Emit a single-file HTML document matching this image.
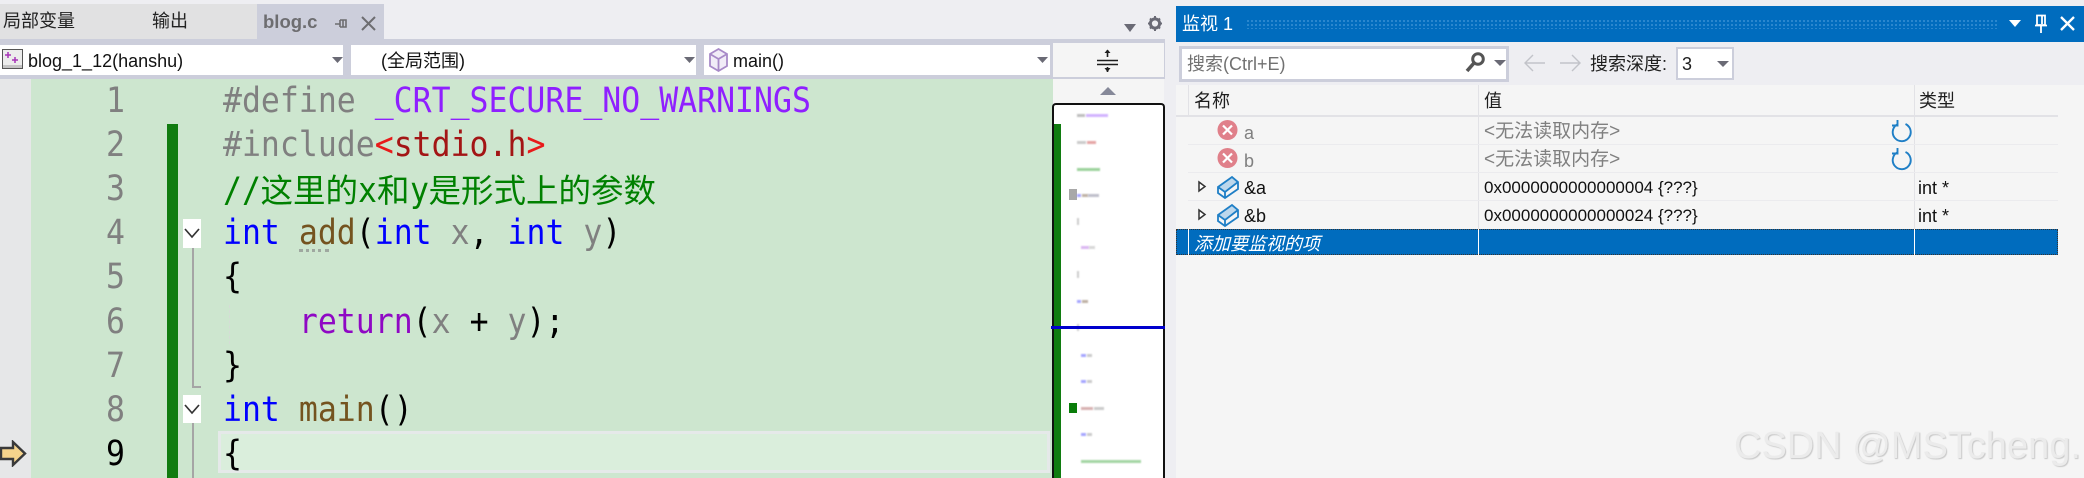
<!DOCTYPE html>
<html lang="zh">
<head>
<meta charset="utf-8">
<title>Visual Studio</title>
<style>
html,body{margin:0;padding:0;height:478px;overflow:hidden}
body{width:2084px;position:relative;background:#eeeef2;font-family:"Liberation Sans","Noto Sans CJK SC",sans-serif;color:#1e1e1e}
.a{position:absolute}
.t{position:absolute;white-space:pre;line-height:30px;height:30px;font-size:18px}
.c{position:absolute;left:222.5px;margin-top:1px;white-space:pre;font-family:"DejaVu Sans Mono",monospace;font-size:35px;line-height:44px;height:44px;color:#000;transform:scaleX(.9);transform-origin:left center}
.c i{font-style:normal}
.c3{position:absolute;left:222.5px;margin-top:1px;white-space:pre;font-family:"Noto Sans CJK SC",sans-serif;font-size:32.5px;line-height:44px;height:44px;color:#008000}
.c3 b{font-weight:normal;display:inline-block;font-family:"DejaVu Sans Mono",monospace;font-size:35px;width:19px;transform:scaleX(.9);transform-origin:left center;line-height:30px}
.n{position:absolute;left:105px;margin-top:1px;width:21px;text-align:center;font-family:"DejaVu Sans Mono",monospace;font-size:35px;line-height:44px;height:44px;color:#808080;transform:scaleX(.9)}
.k{color:#0000ff}.p{color:#808080}.m{color:#8f20ff}.s{color:#a31515}.r{color:#e81a1a}.f{color:#74531f}.v{color:#808080}.w{color:#8f08c4}
.d{position:absolute;filter:blur(.8px);height:3px;opacity:.75}
.sep{position:absolute;width:1px;background:#e2e2e6}
.row{position:absolute;left:1188px;width:870px;height:1px;background:#ebebee}
</style>
</head>
<body>
<!-- Tabs -->
<div class="a" style="left:0;top:4px;width:257px;height:35px;background:#e1e1e2"></div>
<div class="a" style="left:257px;top:4px;width:127px;height:35px;background:#cccedb"></div>
<div class="t" style="left:3px;top:6px;color:#222">局部变量</div>
<div class="t" style="left:152px;top:6px;color:#222">输出</div>
<div class="t" style="left:263px;top:7px;font-size:18.5px;font-weight:bold;color:#6d6d70">blog.c</div>
<svg class="a" style="left:333px;top:15px" width="16" height="16"><path d="M2 9H7M7 5V12M7 5H13V12H7M10 5V12" fill="none" stroke="#6d6d70" stroke-width="1.6"/></svg>
<svg class="a" style="left:360px;top:15px" width="17" height="17"><path d="M2 2L15 15M15 2L2 15" stroke="#6d6d70" stroke-width="2"/></svg>
<svg class="a" style="left:1122px;top:22px" width="16" height="12"><path d="M2 2H14L8 10Z" fill="#6a6a75"/></svg>
<svg class="a" style="left:1147px;top:15px" width="16" height="17"><circle cx="8" cy="8.5" r="4.6" fill="none" stroke="#6a6a75" stroke-width="3"/><path d="M8 1V3M8 14V16M1 8.5H3M13 8.5H15M3 3.5L4.5 5M11.5 12L13 13.5M3 13.5L4.5 12M11.5 5L13 3.5" stroke="#6a6a75" stroke-width="2"/></svg>

<!-- Nav strip -->
<div class="a" style="left:0;top:39px;width:1165px;height:40px;background:#cccedb"></div>
<div class="a" style="left:0;top:45px;width:343px;height:30px;background:#fff"></div>
<div class="a" style="left:351px;top:45px;width:345px;height:30px;background:#fff"></div>
<div class="a" style="left:704px;top:45px;width:346px;height:30px;background:#fff"></div>
<div class="a" style="left:1053px;top:43px;width:111px;height:34px;background:#f5f5f5"></div>
<svg class="a" style="left:2px;top:49px" width="21" height="21"><rect x=".5" y=".5" width="20" height="19" fill="#ececec" stroke="#555"/><path d="M3 6H9M6 3V9M10 11H16M13 8V14" stroke="#a634b8" stroke-width="1.5"/><rect x="1" y="16" width="19" height="3" fill="#c4c4c4"/></svg>
<div class="t" style="left:28px;top:46px;color:#111">blog_1_12(hanshu)</div>
<div class="t" style="left:381px;top:46px;color:#111">(全局范围)</div>
<svg class="a" style="left:708px;top:47px" width="22" height="26" viewBox="0 0 22 26"><path d="M10.5 2L19 7V19L10.5 24L2 19V7Z" fill="#f1ecf7" stroke="#a88ac8" stroke-width="1.8"/><path d="M2 7L10.5 12L19 7M10.5 12V24" fill="none" stroke="#a88ac8" stroke-width="1.8"/></svg>
<div class="t" style="left:733px;top:46px;color:#111">main()</div>
<svg class="a" style="left:331px;top:56px" width="14" height="8"><path d="M1 1H12L6.5 7Z" fill="#6a6a75"/></svg>
<svg class="a" style="left:683px;top:56px" width="14" height="8"><path d="M1 1H12L6.5 7Z" fill="#6a6a75"/></svg>
<svg class="a" style="left:1036px;top:56px" width="14" height="8"><path d="M1 1H12L6.5 7Z" fill="#6a6a75"/></svg>
<svg class="a" style="left:1096px;top:48px" width="24" height="25"><path d="M1 12.5H22M1 16.5H22M11.5 2V9M11.5 19V24" stroke="#1e1e1e" stroke-width="1.6"/><path d="M8.5 5L11.5 1.5L14.5 5ZM8.5 20L11.5 24L14.5 20Z" fill="#1e1e1e"/></svg>

<!-- Editor -->
<div class="a" style="left:0;top:79px;width:31px;height:399px;background:#e6e7e8"></div>
<div class="a" style="left:31px;top:79px;width:1022px;height:399px;background:#cde6cf"></div>
<div class="a" style="left:167px;top:124px;width:11px;height:354px;background:#107c10"></div>
<div class="a" style="left:218px;top:431px;width:832px;height:42px;box-sizing:border-box;border:3px solid #e5e9e9;background:#daeedc"></div>

<div class="a" style="left:192px;top:248px;width:2px;height:139px;background:#a5a5a5"></div>
<div class="a" style="left:192px;top:386px;width:9px;height:2px;background:#a5a5a5"></div>
<div class="a" style="left:192px;top:423px;width:2px;height:55px;background:#a5a5a5"></div>
<div class="a" style="left:183px;top:219px;width:18px;height:29px;background:#fff"></div>
<div class="a" style="left:183px;top:395px;width:18px;height:28px;background:#fff"></div>
<svg class="a" style="left:183px;top:226px" width="18" height="14"><path d="M2 3L9 11L16 3" fill="none" stroke="#333" stroke-width="1.7"/></svg>
<svg class="a" style="left:183px;top:402px" width="18" height="14"><path d="M2 3L9 11L16 3" fill="none" stroke="#333" stroke-width="1.7"/></svg>
<div class="a" style="left:229px;top:305px;width:0;height:39px;border-left:1.5px dashed #d5dcd6"></div>
<div class="a" style="left:299px;top:249px;width:30px;height:0;border-top:3px dotted #9fa8a0"></div>

<div class="n" style="top:78px">1</div>
<div class="n" style="top:122px">2</div>
<div class="n" style="top:166px">3</div>
<div class="n" style="top:210px">4</div>
<div class="n" style="top:254px">5</div>
<div class="n" style="top:299px">6</div>
<div class="n" style="top:343px">7</div>
<div class="n" style="top:387px">8</div>
<div class="n" style="top:431px;color:#000">9</div>

<div class="c" style="top:78px"><i class="p">#define </i><i class="m">_CRT_SECURE_NO_WARNINGS</i></div>
<div class="c" style="top:122px"><i class="p">#include</i><i class="r">&lt;</i><i class="s">stdio.h</i><i class="r">&gt;</i></div>
<div class="c3" style="top:166px"><b>/</b><b>/</b>这里的<b>x</b>和<b>y</b>是形式上的参数</div>
<div class="c" style="top:210px"><i class="k">int</i> <i class="f">add</i>(<i class="k">int</i> <i class="v">x</i>, <i class="k">int</i> <i class="v">y</i>)</div>
<div class="c" style="top:254px">{</div>
<div class="c" style="top:299px">    <i class="w">return</i>(<i class="v">x</i> + <i class="v">y</i>);</div>
<div class="c" style="top:343px">}</div>
<div class="c" style="top:387px"><i class="k">int</i> <i class="f">main</i>()</div>
<div class="c" style="top:431px">{</div>

<svg class="a" style="left:0;top:440px" width="27" height="27"><path d="M1 8H13V2L25 13.5L13 25V19H1Z" fill="#f6d48c" stroke="#3a3a3a" stroke-width="2.4"/></svg>

<!-- Minimap -->
<div class="a" style="left:1053px;top:79px;width:111px;height:24px;background:#f5f5f5"></div>
<svg class="a" style="left:1100px;top:86px" width="16" height="10"><path d="M0 9L8 1L16 9Z" fill="#868999"/></svg>
<div class="a" style="left:1052px;top:103px;width:113px;height:375px;box-sizing:border-box;border:2px solid #111;border-bottom:none;border-radius:4px 4px 0 0;background:#fff"></div>
<div class="a" style="left:1054px;top:124px;width:7px;height:354px;background:#107c10"></div>
<div class="d" style="left:1077px;top:114px;width:8px;background:#aaa"></div>
<div class="d" style="left:1086px;top:114px;width:22px;background:#c39bff"></div>
<div class="d" style="left:1077px;top:141px;width:9px;background:#bbb"></div>
<div class="d" style="left:1087px;top:141px;width:9px;background:#d88"></div>
<div class="d" style="left:1077px;top:168px;width:23px;background:#7cc47c"></div>
<div class="a" style="left:1069px;top:189px;width:8px;height:11px;background:#a8a8a8"></div>
<div class="d" style="left:1077px;top:194px;width:4px;background:#88f"></div>
<div class="d" style="left:1082px;top:194px;width:6px;background:#a98"></div>
<div class="d" style="left:1088px;top:194px;width:11px;background:#aab"></div>
<div class="d" style="left:1077px;top:218px;width:2px;height:7px;background:#bbb"></div>
<div class="d" style="left:1081px;top:246px;width:8px;background:#d0a0ee"></div>
<div class="d" style="left:1089px;top:246px;width:6px;background:#ccc"></div>
<div class="d" style="left:1077px;top:271px;width:2px;height:7px;background:#bbb"></div>
<div class="d" style="left:1077px;top:300px;width:4px;background:#88f"></div>
<div class="d" style="left:1082px;top:300px;width:6px;background:#a98"></div>
<div class="d" style="left:1077px;top:324px;width:2px;height:7px;background:#bbb"></div>
<div class="d" style="left:1081px;top:354px;width:5px;background:#88f"></div>
<div class="d" style="left:1087px;top:354px;width:5px;background:#bbb"></div>
<div class="d" style="left:1081px;top:380px;width:5px;background:#88f"></div>
<div class="d" style="left:1087px;top:380px;width:5px;background:#bbb"></div>
<div class="a" style="left:1069px;top:403px;width:8px;height:10px;background:#0a7d0a"></div>
<div class="d" style="left:1081px;top:407px;width:12px;background:#c99"></div>
<div class="d" style="left:1094px;top:407px;width:10px;background:#bbb"></div>
<div class="d" style="left:1081px;top:433px;width:5px;background:#88f"></div>
<div class="d" style="left:1087px;top:433px;width:5px;background:#bbb"></div>
<div class="d" style="left:1081px;top:460px;width:60px;background:#86c886"></div>
<div class="a" style="left:1051px;top:326px;width:114px;height:3px;background:#0000cd"></div>

<!-- Watch panel -->
<div class="a" style="left:1176px;top:6px;width:908px;height:36px;background:#006cbe"></div>
<div class="t" style="left:1182px;top:9px;color:#fff">监视 1</div>
<div class="a" style="left:1246px;top:19px;width:751px;height:10px;opacity:.5;background-image:radial-gradient(#5aa6e0 1px,transparent 1.2px);background-size:4px 4px"></div>
<svg class="a" style="left:2008px;top:19px" width="14" height="10"><path d="M1 1H13L7 8Z" fill="#fff"/></svg>
<svg class="a" style="left:2034px;top:14px" width="14" height="20"><path d="M3 1.5H11V11H3ZM1 11.5H13M7 12V19M8 2V10" fill="none" stroke="#fff" stroke-width="1.8"/></svg>
<svg class="a" style="left:2060px;top:16px" width="15" height="15"><path d="M1 1L14 14M14 1L1 14" stroke="#fff" stroke-width="2.3"/></svg>

<div class="a" style="left:1179px;top:46px;width:330px;height:36px;box-sizing:border-box;border:3px solid #cccedb;background:#fff"></div>
<div class="t" style="left:1187px;top:49px;color:#717171">搜索(Ctrl+E)</div>
<svg class="a" style="left:1465px;top:50px" width="22" height="24"><circle cx="13" cy="9" r="5.3" fill="none" stroke="#555" stroke-width="3"/><path d="M9 13L2 21" stroke="#555" stroke-width="3.6"/></svg>
<svg class="a" style="left:1494px;top:60px" width="12" height="7"><path d="M0 0H12L6 6Z" fill="#6a6a75"/></svg>
<svg class="a" style="left:1524px;top:54px" width="22" height="18"><path d="M1 9H21M9 1L1 9L9 17" fill="none" stroke="#c2c3c9" stroke-width="1.4"/></svg>
<svg class="a" style="left:1559px;top:54px" width="22" height="18"><path d="M1 9H21M13 1L21 9L13 17" fill="none" stroke="#c2c3c9" stroke-width="1.4"/></svg>
<div class="t" style="left:1590px;top:49px;color:#1e1e1e">搜索深度:</div>
<div class="a" style="left:1676px;top:47px;width:58px;height:33px;box-sizing:border-box;border:2px solid #cccedb;background:#fff"></div>
<div class="t" style="left:1682px;top:49px;color:#1e1e1e">3</div>
<svg class="a" style="left:1717px;top:61px" width="12" height="7"><path d="M0 0H12L6 6Z" fill="#6a6a75"/></svg>

<div class="a" style="left:1176px;top:85px;width:908px;height:393px;background:#f5f5f5"></div>
<div class="a" style="left:1176px;top:115px;width:882px;height:2px;background:#e2e2e6"></div>
<div class="sep" style="left:1188px;top:85px;height:30px"></div>
<div class="sep" style="left:1478px;top:85px;height:144px"></div>
<div class="sep" style="left:1914px;top:85px;height:144px"></div>
<div class="row" style="top:144px"></div>
<div class="row" style="top:172px"></div>
<div class="row" style="top:200px"></div>
<div class="t" style="left:1194px;top:86px;color:#1e1e1e">名称</div>
<div class="t" style="left:1484px;top:86px;color:#1e1e1e">值</div>
<div class="t" style="left:1919px;top:86px;color:#1e1e1e">类型</div>

<svg class="a" style="left:1217px;top:119px" width="21" height="22"><circle cx="10.5" cy="11" r="10" fill="#e0808a"/><path d="M6 6.5L15 15.5M15 6.5L6 15.5" stroke="#fff" stroke-width="2.2"/></svg>
<svg class="a" style="left:1217px;top:147px" width="21" height="22"><circle cx="10.5" cy="11" r="10" fill="#e0808a"/><path d="M6 6.5L15 15.5M15 6.5L6 15.5" stroke="#fff" stroke-width="2.2"/></svg>
<div class="t" style="left:1244px;top:118px;color:#808080">a</div>
<div class="t" style="left:1244px;top:146px;color:#808080">b</div>
<div class="t" style="left:1484px;top:117px;color:#808080;font-size:19px">&lt;无法读取内存&gt;</div>
<div class="t" style="left:1484px;top:145px;color:#808080;font-size:19px">&lt;无法读取内存&gt;</div>
<svg class="a" style="left:1890px;top:119px" width="22" height="24"><path d="M7 5.5A9 9 0 1 0 15.5 5M7.5 1V6.5H2" fill="none" stroke="#1f7fc6" stroke-width="1.9"/></svg>
<svg class="a" style="left:1890px;top:147px" width="22" height="24"><path d="M7 5.5A9 9 0 1 0 15.5 5M7.5 1V6.5H2" fill="none" stroke="#1f7fc6" stroke-width="1.9"/></svg>

<svg class="a" style="left:1197px;top:180px" width="10" height="13"><path d="M2 2L8 6.5L2 11Z" fill="#fff" stroke="#333" stroke-width="1.5"/></svg>
<svg class="a" style="left:1197px;top:208px" width="10" height="13"><path d="M2 2L8 6.5L2 11Z" fill="#fff" stroke="#333" stroke-width="1.5"/></svg>
<svg class="a" style="left:1216px;top:175px" width="24" height="25"><path d="M2 12L16 2L22 7L9 17Z" fill="#bcd7ec"/><path d="M2 12L16 2L22 7V14L9 23L2 18ZM2 12L9 17L22 7M9 17V23" fill="none" stroke="#1f7fc6" stroke-width="1.8"/></svg>
<svg class="a" style="left:1216px;top:203px" width="24" height="25"><path d="M2 12L16 2L22 7L9 17Z" fill="#bcd7ec"/><path d="M2 12L16 2L22 7V14L9 23L2 18ZM2 12L9 17L22 7M9 17V23" fill="none" stroke="#1f7fc6" stroke-width="1.8"/></svg>
<div class="t" style="left:1244px;top:173px;color:#111">&amp;a</div>
<div class="t" style="left:1244px;top:201px;color:#111">&amp;b</div>
<div class="t" style="left:1484px;top:173px;color:#111;font-size:17px">0x0000000000000004 {???}</div>
<div class="t" style="left:1484px;top:201px;color:#111;font-size:17px">0x0000000000000024 {???}</div>
<div class="t" style="left:1918px;top:173px;color:#111">int *</div>
<div class="t" style="left:1918px;top:201px;color:#111">int *</div>

<div class="a" style="left:1176px;top:229px;width:882px;height:26px;box-sizing:border-box;border:1px dotted #333;background:#006cbe"></div>
<div class="sep" style="left:1188px;top:229px;height:26px;background:#fff"></div>
<div class="sep" style="left:1478px;top:229px;height:26px;background:#fff"></div>
<div class="sep" style="left:1914px;top:229px;height:26px;background:#fff"></div>
<div class="t" style="left:1194px;top:229px;height:26px;line-height:30px;color:#fff;font-style:italic">添加要监视的项</div>

<!-- Watermark -->
<div class="t" style="left:1734px;top:426px;height:40px;line-height:40px;font-size:38px;color:#ebebeb;text-shadow:1px 1px 1px #c8c8c8">CSDN @MSTcheng.</div>
</body>
</html>
